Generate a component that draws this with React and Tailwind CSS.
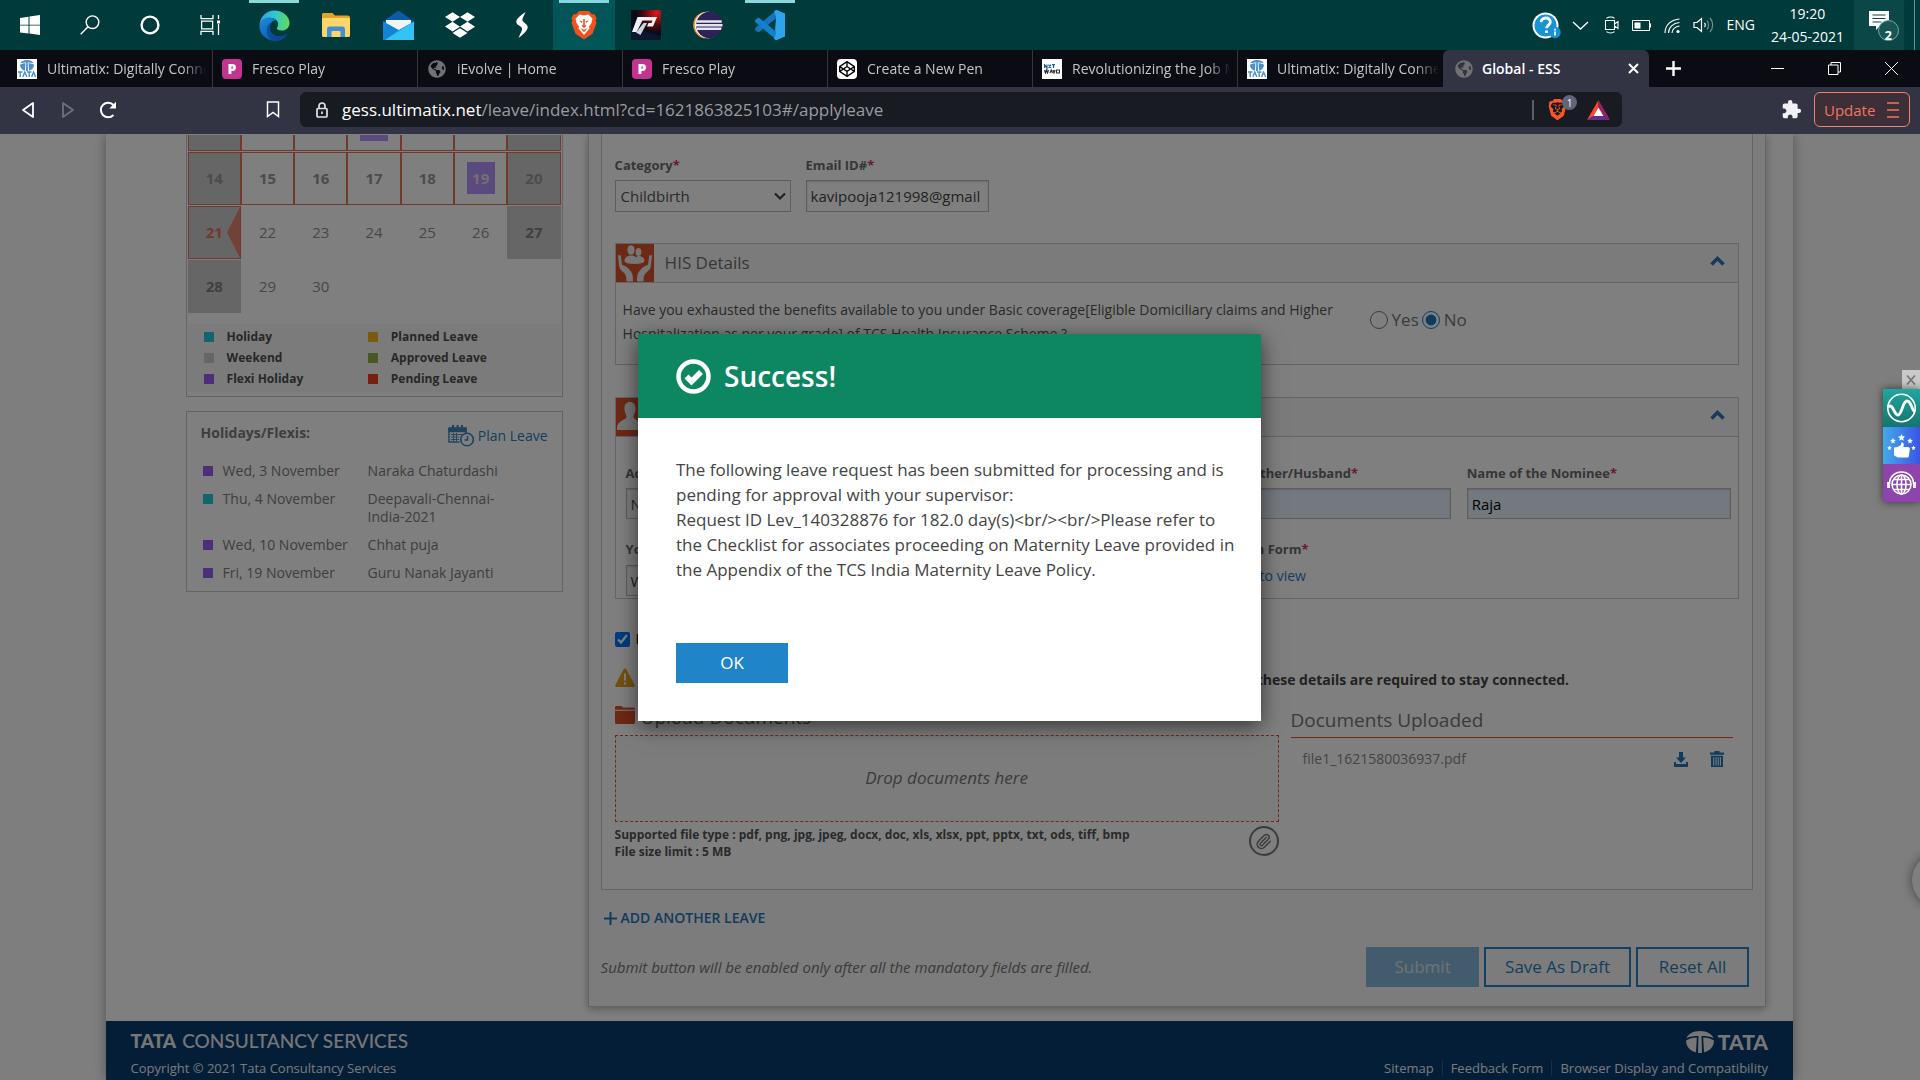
import React from "react";
import { FaCodepen, FaDropbox, FaGlobeAmericas } from "react-icons/fa";
import { MdExtension } from "react-icons/md";
import { SiBrave } from "react-icons/si";
import { Paperclip } from "lucide-react";

/* ---------- taskbar icons ---------- */

const WindowsIcon = () => (
  <svg width="20" height="20" viewBox="0 0 20 20" fill="#fff">
    <path d="M0 3l8.5-1.3v8H0zM9.5 1.5L20 0v9.7H9.5zM0 10.6h8.5v8L0 17.4zM9.5 10.6H20V20L9.5 18.6z" />
  </svg>
);
const SearchIcon = () => (
  <svg width="20" height="20" viewBox="0 0 20 20" fill="none" stroke="#fff" strokeWidth="1.4">
    <circle cx="12.5" cy="7.2" r="6.3" />
    <path d="M8 11.8L.7 19.3" />
  </svg>
);
const CortanaIcon = () => (
  <svg width="20" height="20" viewBox="0 0 20 20" fill="none" stroke="#fff" strokeWidth="2.4">
    <circle cx="10" cy="10" r="8.4" />
  </svg>
);
const TaskViewIcon = () => (
  <svg width="21" height="20" viewBox="0 0 21 20" fill="none" stroke="#fff" strokeWidth="1.3">
    <path d="M1 0v3.6h12V0M1 20v-3.6h12V20M1.6 6.2h11v7.6h-11zM18.5 0v4M18.5 9v11" />
    <path d="M17 5.5h3v3h-3z" fill="#fff" stroke="none" />
  </svg>
);
const EdgeIcon = ({ size = 31 }) => (
  <svg width={size} height={size} viewBox="0 0 32 32">
    <defs>
      <linearGradient id="edgeTop" x1="0" y1="0.4" x2="1" y2="0.5">
        <stop offset="0" stopColor="#2aa9e0" />
        <stop offset="0.5" stopColor="#33c6cf" />
        <stop offset="1" stopColor="#5fdc55" />
      </linearGradient>
      <linearGradient id="edgeLow" x1="0" y1="0" x2="0.8" y2="1">
        <stop offset="0" stopColor="#1b8de0" />
        <stop offset="1" stopColor="#0c4fa0" />
      </linearGradient>
    </defs>
    <path d="M.6 14.5C1.800 6 8 .4 16 .4c8.600 0 15.500 6 15.500 13 0 4.700-3.500 7.800-7.800 7.800-3.500 0-5.400-1.200-5.400-2.300 0-.8 1.500-1.600 1.500-4.300 0-3.600-3.700-6.600-8.600-6.600-5 0-8.800 2.500-10.600 6.500z" fill="url(#edgeTop)" />
    <path d="M.5 16C.8 11.500 4.500 8 10.600 8c3 0 5.400.9 7 2.400-3.800.7-6.400 4-6.400 8.100 0 5 4.200 8.500 9.500 8.500 2.800 0 5.600-.8 7.600-2 .6-.3 1 .2.700.7C26.300 29.500 21.700 31.700 16.500 31.700 7.500 31.700.2 25 .5 16z" fill="url(#edgeLow)" />
    <path d="M11.200 18.500c0-3.300 1.700-6.200 4.400-7.600C11 12.500 8 16.500 8 21.300c0 4.700 3 8.600 7.300 10.300 5.700.4 10.700-2 13.700-5.900.3-.5-.1-1-.7-.7-2 1.200-4.800 2-7.600 2-5.300 0-9.500-3.500-9.500-8.500z" fill="#0b3f8c" opacity=".65" />
  </svg>
);
const FolderIcon = () => (
  <svg width="28" height="24" viewBox="0 0 28 24">
    <path d="M0 1.500C0 .7.700 0 1.500 0h9l2.500 2.500H26c1 0 2 .8 2 2V22H0z" fill="#e0a526" />
    <path d="M1 5h26c.6 0 1 .4 1 1v16.500c0 .8-.5 1.500-1.500 1.500h-25C.7 24 0 23.300 0 22.500V6c0-.6.400-1 1-1z" fill="#fbd66b" />
    <path d="M5 24v-8c0-1.500 1-2.500 2.500-2.500h13c1.500 0 2.500 1 2.500 2.500v8h-4.500v-4.800c0-.7-.5-1.200-1.200-1.200h-6.600c-.7 0-1.200.5-1.200 1.200V24z" fill="#3f8fd8" />
  </svg>
);
const MailIcon = () => (
  <svg width="31" height="29" viewBox="0 0 31 29">
    <path d="M0 10.500L14 .5c1-.7 2-.7 3 0l14 10v5H0z" fill="#0c5ba8" />
    <path d="M3 9h25v11H3z" fill="#f4f4f4" />
    <path d="M0 10.500L15.500 19 31 10.500V28c0 .6-.4 1-1 1H1c-.6 0-1-.4-1-1z" fill="#1d9be3" />
    <path d="M31 10.500L2 29h28c.6 0 1-.4 1-1z" fill="#33c3f5" />
    <path d="M0 10.500L15.500 19 2 29H1c-.6 0-1-.4-1-1z" fill="#1384d4" />
  </svg>
);
const StrokeIcon = () => (
  <svg width="16" height="26" viewBox="0 0 16 26" fill="#fff">
    <path d="M11.500 0C7 3 3.500 6 2.500 8.500c-.8 2 .3 3.600 2.500 5 2.500 1.600 3.500 2.500 3 4.500L4.500 26C9 22.500 12.500 19.500 13.500 16.500c.7-2.200-.3-3.600-2.500-5.300C8.800 9.600 8 8.500 8.500 6.700z" />
  </svg>
);
const BraveIcon = () => (
  <svg width="26" height="30" viewBox="0 0 26 30">
    <path d="M8 1h10l3 3.200 2.300-.3L25.500 8l-.8 2.500.8 2.500-4.200 11L13 29.500 4.700 24 .5 13l.8-2.500L.5 8l2.200-4.100 2.300.3z" fill="#f4501e" />
    <path d="M13 5.500l4.500-1 4 4.300-1 4.200-2.500 3.500.5 2-5.500 6.500L7.500 18.500l.5-2L5.500 13l-1-4.200 4-4.300z" fill="#fff" />
    <path d="M8 10.200l3.600 1.300-.9 1.500zM18 10.200l-3.600 1.300.9 1.500zM12.200 9h1.600v5.600l1.700 1.300-2.500 1.800-2.500-1.800 1.700-1.300zM9.500 18.200l3.500 1.600 3.500-1.600-3.500 4z" fill="#f4501e" />
  </svg>
);
const RacingIcon = () => (
  <svg width="30" height="30" viewBox="0 0 30 30">
    <defs>
      <radialGradient id="race" cx="0.85" cy="0.1" r="0.7">
        <stop offset="0" stopColor="#e01818" />
        <stop offset="0.6" stopColor="#4a0a12" />
        <stop offset="1" stopColor="#070a14" />
      </radialGradient>
    </defs>
    <path d="M0 0h30v30H0z" fill="url(#race)" />
    <path d="M0 17l30 9v4H0z" fill="#0a1730" />
    <path d="M6.500 7H26l-4 9.500h-6l1.500-3.500h3l1-2.500h-10L5.500 22H1z" fill="#f2f2f2" />
    <path d="M12.500 13H16l-6.500 12L5 22.500z" fill="#cfd3da" />
  </svg>
);
const EclipseIcon = () => (
  <svg width="30" height="28" viewBox="0 0 30 28">
    <circle cx="13.500" cy="14" r="13.300" fill="#f0932c" />
    <circle cx="15" cy="14" r="13.200" fill="#fff" />
    <circle cx="16.300" cy="14" r="13.200" fill="#2c2255" />
    <path d="M4 9.300h24.700v2.400H3.300zM3 13h26.500v2.400H3zM3.400 16.600h25.300l-.7 2.400H4z" fill="#e6e4f2" />
  </svg>
);
const CodeIcon = () => (
  <svg width="30" height="30" viewBox="0 0 30 30">
    <path d="M21.500 0L30 3.800v22.400L21.500 30l-2-1z" fill="#2fa8f0" />
    <path d="M21.500 0v8L4 22.300 2.500 22 0 19.800v-1.600z" fill="#1274bd" />
    <path d="M21.500 30v-8L4 7.700 2.500 8 0 10.200v1.600z" fill="#0f82cf" />
    <path d="M21.500 0L19 1l2.500 7v14L19 29l2.500 1L30 26.200V3.800z" fill="#2fa3ec" />
  </svg>
);

const pinned = [
  { name: "Edge", icon: <EdgeIcon />, mark: true },
  { name: "File Explorer", icon: <FolderIcon /> },
  { name: "Mail", icon: <MailIcon /> },
  { name: "Dropbox", icon: <FaDropbox size={30} color="#fff" /> },
  { name: "Stroke", icon: <StrokeIcon /> },
  { name: "Brave", icon: <BraveIcon />, mark: true, active: true },
  { name: "Racing game", icon: <RacingIcon /> },
  { name: "Eclipse", icon: <EclipseIcon /> },
  { name: "Code", icon: <CodeIcon />, mark: true },
];

function Taskbar() {
  return (
    <div className="flex h-[50px] shrink-0 items-stretch bg-[#003a3b] text-white">
      {[
        ["Start", <WindowsIcon />],
        ["Search", <SearchIcon />],
        ["Cortana", <CortanaIcon />],
        ["Task view", <TaskViewIcon />],
      ].map(([name, icon]) => (
        <button key={name} aria-label={name} className="flex w-[60px] items-center justify-center">
          {icon}
        </button>
      ))}
      <div className="ml-[3px] flex items-stretch">
        {pinned.map((p) => (
          <button
            key={p.name}
            aria-label={p.name}
            className={
              p.active
                ? "relative flex w-[62px] items-center justify-center bg-[#035658]"
                : "relative flex w-[62px] items-center justify-center"
            }
          >
            {p.mark && <span className="absolute inset-x-1.5 top-0 h-[3px] bg-[#8ad8da]" />}
            {p.icon}
          </button>
        ))}
      </div>
      <div className="ml-auto flex items-center">
        <button aria-label="Help" className="mr-[11px]">
          <svg width="29" height="27" viewBox="0 0 29 27">
            <circle cx="13.500" cy="13.500" r="13" fill="#fff" />
            <circle cx="13.500" cy="13.500" r="11" fill="#1593d2" />
            <path d="M9 10.300c0-2.600 2-4.300 4.700-4.300s4.600 1.600 4.600 4c0 3.300-3.800 3.300-3.800 6.300M14.500 18.500v2.500" fill="none" stroke="#fff" strokeWidth="2.800" />
            <circle cx="23" cy="20.500" r="5.700" fill="#1593d2" />
            <path d="M23 19.500v4M23 16.800v1.600" stroke="#fff" strokeWidth="1.800" />
          </svg>
        </button>
        <svg className="mr-[15px]" width="17" height="9" viewBox="0 0 17 9" fill="none" stroke="#fff" strokeWidth="1.300">
          <path d="M1 1l7.500 7L16 1" />
        </svg>
        <svg className="mr-3" width="16" height="18" viewBox="0 0 16 18" fill="none" stroke="#fff" strokeWidth="1.100">
          <path d="M1.500 4.500h9v9h-9zM10.500 8l3.500-2.500v7L10.500 10M2.500 2.300C4.500.5 8.500.5 10.500 2.300M2.500 15.700c2 1.800 6 1.800 8 0" />
        </svg>
        <svg className="mr-3" width="20" height="11" viewBox="0 0 20 11" fill="none" stroke="#fff">
          <path d="M.5.5h17v10H.5zM18.500 3.500v4" />
          <path d="M2.500 2.500h6v6h-6z" fill="#fff" stroke="none" />
        </svg>
        <svg className="mr-3" width="17" height="17" viewBox="0 0 17 17" fill="none" stroke="#fff" strokeWidth="1.100">
          <path d="M1 16C1 8 7.500 2.500 15.500 2M4.500 16c0-5.500 4.500-10 11-10.500M8 16c0-3.500 3-6.500 7.500-7" />
          <circle cx="14" cy="14.500" r="1.600" fill="#fff" stroke="none" />
        </svg>
        <svg className="mr-3" width="21" height="16" viewBox="0 0 21 16" fill="none" stroke="#fff" strokeWidth="1.200">
          <path d="M1 5.500h3L8.500 1.500v13L4 10.500H1zM11.500 6c1 1 1 3 0 4" />
          <path d="M14 3.500c2 2.500 2 6.500 0 9M17 1c3.500 4 3.500 10 0 14" opacity=".45" />
        </svg>
        <span className="mr-4 text-[14px] leading-5">ENG</span>
        <div className="mr-2.5 flex flex-col items-center gap-[3px] text-[14px] leading-5">
          <span>19:20</span>
          <span>24-05-2021</span>
        </div>
        <button aria-label="Notifications, 2 new" className="relative flex h-[50px] w-[50px] items-center justify-end bg-[#0c4748] pr-[5px]">
          <svg width="30" height="32" viewBox="0 0 30 32">
            <path d="M0 2h20v15H11l-4 4v-4H0z" fill="#fff" />
            <path d="M3.500 6h13M3.500 9.500h13M3.500 13h9" stroke="#0c4748" strokeWidth="1.200" />
            <circle cx="19.500" cy="21.500" r="10" fill="#1a5556" stroke="#79a5a6" />
          </svg>
          <span className="absolute right-3 bottom-[7px] text-[13px] leading-4 font-bold">2</span>
        </button>
        <span className="mr-[5px] ml-2.5 h-[50px] w-px bg-[#6d9091]" />
      </div>
    </div>
  );
}

/* ---------- browser frame ---------- */

const TataMark = ({ width = 20, color = "#4a8fc7" }) => (
  <svg width={width} viewBox="0 0 28 22" fill={color}>
    <path d="M14 0c6.500 0 12 2.800 13.500 7C24 5.500 20 5 15.500 5L16 22h-4l.5-17C8 5 4 5.500.5 7 2 2.800 7.500 0 14 0z" />
    <path d="M10.800 6.500L10 21.300C4.300 19.900.2 16 0 9.500 3 7.500 7 6.600 10.800 6.500zM17.200 6.500l.8 14.800c5.700-1.400 9.800-5.300 10-11.800-3-2-7-2.900-10.800-3z" />
  </svg>
);
const TataFav = () => (
  <span className="flex h-5 w-5 shrink-0 flex-col items-center justify-center bg-white">
    <TataMark width={14} />
    <svg width="18" height="6" viewBox="0 0 18 6" fill="none" stroke="#4a8fc7" strokeWidth="1.400">
      <path d="M0 1h4.500M2.200 1v5M4.800 6L6.800 1l2 5M9 1h4.500M11.200 1v5M13.600 6l2-5 2 5" />
    </svg>
  </span>
);
const FrescoFav = () => (
  <span className="flex h-5 w-5 shrink-0 items-center justify-center rounded-sm bg-[#c2348f] text-[14px] leading-5 font-extrabold text-white">P</span>
);
const GlobeFav = () => (
  <span className="flex w-5 shrink-0 justify-center">
    <FaGlobeAmericas size={18} color="#6f7175" />
  </span>
);
const PenFav = () => (
  <span className="flex h-5 w-5 shrink-0 items-center justify-center rounded-sm bg-white">
    <FaCodepen size={16} color="#000" />
  </span>
);
const NxtFav = () => (
  <span className="flex h-5 w-5 shrink-0 items-center justify-center bg-white">
    <svg width="16" height="10" viewBox="0 0 16 10" fill="none" stroke="#255a92" strokeWidth="1.200">
      <path d="M.6 4V.6L3 4V.6M4.500.6L7 4M7 .6L4.500 4M8 .6h3M9.500.6V4" />
      <path d="M.5 6l1 3 1-3 1 3 1-3M6 9l1.200-3L8.500 9M9 6l1 3 1-3M12.500 6v3h3V6z" stroke="#333" />
    </svg>
  </span>
);

const tabs = [
  ["Ultimatix: Digitally Connected", <TataFav />],
  ["Fresco Play", <FrescoFav />],
  ["iEvolve | Home", <GlobeFav />],
  ["Fresco Play", <FrescoFav />],
  ["Create a New Pen", <PenFav />],
  ["Revolutionizing the Job Market", <NxtFav />],
  ["Ultimatix: Digitally Connected", <TataFav />],
];

function TabStrip() {
  return (
    <div className="flex h-[37px] shrink-0 items-stretch bg-[#0b0b14] pl-2 text-[14px] text-[#c3c4c8]">
      {tabs.map(([title, icon], i) => (
        <button
          key={i}
          className={
            i === 6
              ? "flex w-[205px] items-center gap-2.5 pr-1 pl-[9px]"
              : "flex w-[205px] items-center gap-2.5 border-r border-[#35363d] pr-1.5 pl-[9px]"
          }
        >
          {icon}
          <span className="min-w-0 flex-1 overflow-hidden [mask-image:linear-gradient(to_right,black_85%,transparent)] text-left leading-5 whitespace-nowrap">
            {title}
          </span>
        </button>
      ))}
      <div className="flex w-[206px] items-center rounded-t-md bg-[#323443] pr-2.5 pl-[11px] text-white">
        <button className="flex flex-1 items-center gap-2 font-semibold">
          <GlobeFav />
          <span className="leading-5">Global - ESS</span>
        </button>
        <button aria-label="Close tab">
          <svg width="11" height="11" viewBox="0 0 11 11" stroke="#fff" strokeWidth="2">
            <path d="M1 1l9 9M10 1l-9 9" />
          </svg>
        </button>
      </div>
      <button aria-label="New tab" className="ml-[17px] flex items-center">
        <svg width="15" height="15" viewBox="0 0 15 15" stroke="#fff" strokeWidth="2.400">
          <path d="M7.500 0v15M0 7.500h15" />
        </svg>
      </button>
      <div className="ml-auto flex items-center gap-11 pr-[22px]">
        <button aria-label="Minimize">
          <svg width="13" height="13" viewBox="0 0 13 13" stroke="#fff"><path d="M0 6.500h13" /></svg>
        </button>
        <button aria-label="Restore">
          <svg width="13" height="13" viewBox="0 0 13 13" fill="none" stroke="#fff"><path d="M.5 3h9.500v9.500H.5zM3 3V.5h9.500V10H10" /></svg>
        </button>
        <button aria-label="Close window">
          <svg width="13" height="13" viewBox="0 0 13 13" stroke="#fff"><path d="M0 0l13 13M13 0L0 13" /></svg>
        </button>
      </div>
    </div>
  );
}

function Toolbar() {
  return (
    <div className="flex h-[47px] shrink-0 items-center bg-[#323443] pr-2.5 pb-0.5 pl-[21px]">
      <button aria-label="Back">
        <svg width="14" height="18" viewBox="0 0 14 18" fill="none" stroke="#fff" strokeWidth="1.800" strokeLinejoin="round"><path d="M12 2v14L2 9z" /></svg>
      </button>
      <button aria-label="Forward" className="ml-[26px]">
        <svg width="14" height="18" viewBox="0 0 14 18" fill="none" stroke="#6d6f7b" strokeWidth="1.800" strokeLinejoin="round"><path d="M2 2v14l10-7z" /></svg>
      </button>
      <button aria-label="Reload" className="ml-6">
        <svg width="18" height="18" viewBox="0 0 18 18" fill="none" stroke="#fff" strokeWidth="2">
          <path d="M14.500 14A7.300 7.300 0 1 1 14.500 4" />
          <path d="M17 .8v6.700h-6.700z" fill="#fff" stroke="none" />
        </svg>
      </button>
      <button aria-label="Bookmark" className="ml-[149px]">
        <svg width="14" height="17" viewBox="0 0 14 17" fill="none" stroke="#fff" strokeWidth="1.500"><path d="M1.500 1h11v14.500L7 11.500l-5.500 4z" /></svg>
      </button>
      <div className="ml-5 flex h-[35px] min-w-0 flex-1 items-center rounded-md bg-[#181b22] pr-3 pl-4">
        <svg width="12" height="16" viewBox="0 0 12 16" fill="none" stroke="#e4e4e6" strokeWidth="1.700">
          <rect x="1" y="6.500" width="10" height="8.500" rx="1" />
          <path d="M3 6.500V4a3 3 0 0 1 6 0v2.500M6 9.500v2.500" />
        </svg>
        <span className="ml-[14px] text-[17px] leading-6 text-[#9b9ca1]">
          <span className="text-white">gess.ultimatix.net</span>/leave/index.html?cd=1621863825103#/applyleave
        </span>
        <span className="ml-auto h-5 w-0.5 bg-[#5d5f66]" />
        <button aria-label="Brave shields, 1 blocked" className="relative ml-[13px] flex w-[30px]">
          <SiBrave size={21} color="#fb542b" />
          <span className="absolute -top-1 right-0 flex h-[15px] w-[15px] items-center justify-center rounded-full bg-[#62657a] text-[10px] leading-3 text-white">1</span>
        </button>
        <button aria-label="Rewards" className="ml-2.5">
          <svg width="23" height="20" viewBox="0 0 23 20">
            <path d="M11.500 0L0 20l6.500-4 5-8.500z" fill="#ff4724" />
            <path d="M11.500 0L23 20l-6.500-4-5-8.500z" fill="#9e1f63" />
            <path d="M0 20h23l-6.500-4h-10z" fill="#662d91" />
            <path d="M11.500 7.500l5 8.500h-10z" fill="#fff" />
          </svg>
        </button>
      </div>
      <button aria-label="Extensions" className="ml-[159px]">
        <MdExtension size={21} color="#f1f1f3" />
      </button>
      <button className="ml-3 flex h-[35px] w-[96px] items-center justify-between rounded-md border border-[#f48070] bg-[#3d2f38] pr-2.5 pl-[9px] text-[15px] leading-5 text-[#f5735f]">
        Update
        <svg width="12" height="16" viewBox="0 0 12 16" stroke="#f5735f" strokeWidth="1.500"><path d="M0 1h12M0 8h12M0 15h12" /></svg>
      </button>
    </div>
  );
}

/* ---------- leave page ---------- */

const calendarRows = [
  [["14", "wr"], ["15", "r"], ["16", "r"], ["17", "r"], ["18", "r"], ["19", "f"], ["20", "wr"]],
  [["21", "t"], ["22"], ["23"], ["24"], ["25"], ["26"], ["27", "w"]],
  [["28", "w"], ["29"], ["30"], [""], [""], [""], [""]],
];
const cellClass = {
  wr: "border border-[#e5735f] bg-[#cdcdcd] font-bold text-[#989898]",
  r: "border border-[#e5735f] font-bold text-[#989898]",
  f: "border border-[#e5735f] font-bold text-[#e3e3e3]",
  t: "relative border border-[#e5735f] bg-[#cdcdcd] font-bold text-[#e5735f]",
  w: "bg-[#cdcdcd] font-bold text-[#808080]",
  plain: "text-[#8f8f8f]",
};

function Calendar() {
  return (
    <section className="border border-t-0 border-[#c8c8c8] px-px pb-1">
      <table className="w-full table-fixed border-separate border-spacing-x-0 border-spacing-y-px text-center text-[15px] leading-5">
        <tbody>
          <tr>
            {[0, 1, 2, 3, 4, 5, 6].map((d) => (
              <td
                key={d}
                className={
                  d === 0 || d === 6
                    ? "h-4 border border-t-0 border-[#e5735f] bg-[#cdcdcd] p-0"
                    : "h-4 border border-t-0 border-[#e5735f] p-0 align-top"
                }
              >
                {d === 3 && <span className="mx-auto block h-1.5 w-7 bg-[#b795fb]" />}
              </td>
            ))}
          </tr>
          {calendarRows.map((row, i) => (
            <tr key={i}>
              {row.map(([day, kind], j) => (
                <td key={j} className={"h-[53px] p-0 pb-0.5 " + cellClass[kind || "plain"]}>
                  {kind === "f" ? <span className="mx-auto flex h-8 w-7 items-center justify-center bg-[#b795fb]">{day}</span> : day}
                  {kind === "t" && (
                    <svg className="absolute top-0 right-0" width="13" height="51" viewBox="0 0 13 51"><path d="M13 0v51L0 25.500z" fill="#e5836f" /></svg>
                  )}
                </td>
              ))}
            </tr>
          ))}
        </tbody>
      </table>
      <ul className="mt-2.5 grid grid-cols-[46%_54%] bg-[#f7f7f7] pt-0.5 pb-[3px] pl-4 text-[12px] leading-[21px] font-bold text-[#4f4f4f]">
        {[
          ["bg-[#25c8dc]", "Holiday"],
          ["bg-[#f5b51b]", "Planned Leave"],
          ["bg-[#cdcdcd]", "Weekend"],
          ["bg-[#8eb04a]", "Approved Leave"],
          ["bg-[#9a5cf7]", "Flexi Holiday"],
          ["bg-[#ef4023]", "Pending Leave"],
        ].map(([color, name]) => (
          <li key={name} className="flex items-center gap-[13px]">
            <span className={"h-2.5 w-2.5 " + color} />
            {name}
          </li>
        ))}
      </ul>
    </section>
  );
}

function Holidays() {
  return (
    <section className="mt-[14px] border border-[#c8c8c8] px-[14px] pt-2 pb-1 text-[14px] leading-[18px] text-[#7c7c7c]">
      <div className="mb-[5px] flex h-8 items-start justify-between">
        <h2 className="pt-1 font-bold">Holidays/Flexis:</h2>
        <a href="#plan" className="flex h-8 items-center gap-1 text-[#2a7cb8]">
          <svg width="26" height="22" viewBox="0 0 26 22" fill="none" stroke="#3c87bf" strokeWidth="1.400">
            <path d="M1 3.500h17v5M1 3.500V17h10.500" />
            <path d="M1 3h17v3.500H1z" fill="#3c87bf" />
            <path d="M5 0v4M9.500 0v4M14 0v4" strokeWidth="2" />
            <path d="M3 9.500h11M3 12h8M3 14.500h8M5.500 8v8M8.500 8v8" strokeWidth=".9" />
            <circle cx="19" cy="14.500" r="6.300" strokeWidth="1.600" />
            <path d="M19.500 11v4h-3" />
          </svg>
          Plan Leave
        </a>
      </div>
      <ul>
        {[
          ["bg-[#9a5cf7]", "Wed, 3 November", "Naraka Chaturdashi"],
          ["bg-[#25c8dc]", "Thu, 4 November", "Deepavali-Chennai-India-2021"],
          ["bg-[#9a5cf7]", "Wed, 10 November", "Chhat puja"],
          ["bg-[#9a5cf7]", "Fri, 19 November", "Guru Nanak Jayanti"],
        ].map(([color, date, name]) => (
          <li key={date} className="flex py-[5px]">
            <span className={"mt-1 mr-2.5 ml-0.5 h-2.5 w-2.5 shrink-0 " + color} />
            <span className="w-[145px] shrink-0">{date}</span>
            <span className="w-[140px]">{name}</span>
          </li>
        ))}
      </ul>
    </section>
  );
}

const Star = () => <span className="text-[#d93058]">*</span>;

function Label({ htmlFor, children }) {
  return (
    <label htmlFor={htmlFor} className="block text-[13px] leading-[18px] font-bold whitespace-nowrap text-[#6c6c6c]">
      {children}
      <Star />
    </label>
  );
}

function Panel({ title, icon, className, children }) {
  return (
    <section className={"border border-[#c8c8c8] " + className}>
      <header className="flex h-[39px] items-center border-b border-[#c8c8c8] bg-[#f7f7f7]">
        <span className="flex h-[38px] w-[38px] shrink-0 items-center justify-center bg-[#d9532c]">{icon}</span>
        <h2 className="ml-[11px] text-[17px] leading-6 text-[#6f6f6f]">{title}</h2>
        <button aria-label={"Collapse " + title} className="mr-[13px] mb-1 ml-auto">
          <svg width="15" height="10" viewBox="0 0 15 10" fill="none" stroke="#2a74b4" strokeWidth="3.500"><path d="M1.500 8.500l6-6 6 6" /></svg>
        </button>
      </header>
      {children}
    </section>
  );
}

const HandsIcon = () => (
  <svg width="34" height="37" viewBox="0 0 34 37" fill="#ececec">
    <ellipse cx="13" cy="5" rx="3.600" ry="4.800" />
    <ellipse cx="20.500" cy="7" rx="2.900" ry="4" />
    <path d="M6.500 16.500c0-3.500 1.500-4.500 4.800-6h3.400c2 .8 3 1.300 3.600 2l1.200-1.500h2.500c2.800 1 4.500 2 4.500 5.500l-2 1.500c-5 1.200-11 1.200-16 0z" />
    <path d="M0 10.500c1.500-1.500 3 0 3 1.500l1 8c2 0 6 2.500 8.500 6 2 2.500 2.500 4.500 2.500 10.500H8.500C8.500 31 7.500 29 5 27 2 24.500 1.300 23 1 20zM34 10.500c-1.500-1.500-3 0-3 1.500l-1 8c-2 0-6 2.500-8.500 6-2 2.500-2.500 4.500-2.500 10.500h6.500c0-5.500 1-7.500 3.500-9.500 3-2.500 3.700-4 4-7z" />
  </svg>
);
const PeopleIcon = () => (
  <svg width="36" height="30" viewBox="0 0 36 30" fill="#ececec">
    <path d="M13 0c3.500 0 5.500 2.500 5.500 6.500 0 4.500-2 6-2 8.500 0 3 8.500 3.500 8.500 11v2H0v-2c0-7.500 9.500-8 9.500-11 0-2.500-2-4-2-8.500C7.500 2.500 9.500 0 13 0z" />
    <path d="M26 4c3 0 4.500 2 4.500 5s-1.800 4.500-1.800 6.500c0 2.500 7.300 3 7.300 8.500v2h-9c-.5-6-5-8-6.500-9.500C23 14 21.500 13 21.500 9S23 4 26 4z" />
  </svg>
);

const inputBase = "block w-full border border-[#bdbdbd] pl-1 pr-2 text-[15px] shadow-[inset_0_1px_2px_rgba(0,0,0,0.15)]";

function LeaveForm() {
  return (
    <div className="border border-t-0 border-[#c8c8c8] bg-white px-[13px] pt-[22px] pb-[29px]">
      <div className="flex gap-[15px]">
        <div className="w-[176px]">
          <Label htmlFor="category">Category</Label>
          <div className="relative mt-1.5">
            <select id="category" className="block h-8 w-full appearance-none border border-[#bdbdbd] bg-white px-[5px] text-[15px] leading-5 text-[#555]">
              <option>Childbirth</option>
            </select>
            <svg className="pointer-events-none absolute top-3 right-[5px]" width="12" height="9" viewBox="0 0 12 9" fill="none" stroke="#444" strokeWidth="2.200"><path d="M1 1.500l5 5 5-5" /></svg>
          </div>
        </div>
        <div className="w-[183px]">
          <Label htmlFor="email">Email ID#</Label>
          <input id="email" className={inputBase + " mt-1.5 h-8 bg-white text-[#444]"} defaultValue="kavipooja121998@gmail.com" />
        </div>
      </div>

      <Panel title="HIS Details" icon={<HandsIcon />} className="mt-[31px]">
        <fieldset className="flex items-start px-[7px] pt-[15px] pb-[18px]">
          <p className="w-[747px] text-[14px] leading-6 text-[#555]">
            Have you exhausted the benefits available to you under Basic coverage[Eligible Domiciliary claims and Higher
            <br />
            Hospitalization as per your grade] of TCS Health Insurance Scheme ?
          </p>
          <div className="mt-2.5 flex items-center text-[17px] leading-6 text-[#777]">
            <input id="his-yes" name="his" type="radio" className="h-[18px] w-[18px] accent-[#1b78c2]" />
            <label htmlFor="his-yes" className="mr-[3px] ml-1">Yes</label>
            <input id="his-no" name="his" type="radio" defaultChecked className="h-[18px] w-[18px] accent-[#1b78c2]" />
            <label htmlFor="his-no" className="ml-1">No</label>
          </div>
        </fieldset>
      </Panel>

      <Panel title="Nominee Details" icon={<PeopleIcon />} className="mt-8">
        <div className="grid grid-cols-4 gap-x-4 pt-[27px] pr-[7px] pb-[2px] pl-[10px]">
          <div>
            <Label htmlFor="address">Address</Label>
            <input id="address" className={inputBase + " mt-1.5 h-[31px] bg-white text-[#555]"} defaultValue="No" />
          </div>
          <div>
            <Label htmlFor="contact">Contact Number</Label>
            <input id="contact" className={inputBase + " mt-1.5 h-[31px] bg-[#e8f0fe]"} defaultValue="" />
          </div>
          <div>
            <Label htmlFor="guardian">Name of Father/Husband</Label>
            <input id="guardian" className={inputBase + " mt-1.5 h-[31px] bg-[#e8f0fe]"} defaultValue="" />
          </div>
          <div>
            <Label htmlFor="nominee">Name of the Nominee</Label>
            <input id="nominee" className={inputBase + " mt-1.5 h-[31px] bg-[#e8f0fe]"} defaultValue="Raja" />
          </div>
          <div className="mt-[21px]">
            <Label htmlFor="relation">Your Relationship</Label>
            <input id="relation" className={inputBase + " mt-[7px] h-[31px] bg-white text-[#444]"} defaultValue="Wife" />
          </div>
          <div className="col-start-3 mt-[21px]">
            <p className="text-[13px] leading-[18px] font-bold text-[#6c6c6c]">Nomination Form<Star /></p>
            <a href="#nomination" className="mt-2 block pl-1.5 text-[14px] leading-5 text-[#2a7cb8]">Click here to view</a>
          </div>
        </div>
      </Panel>

      <div className="mt-[30px] flex h-5 items-center gap-1.5">
        <input id="confirm" type="checkbox" defaultChecked className="h-[15px] w-[15px] accent-[#0075ff]" />
        <label htmlFor="confirm" className="text-[14px] leading-5 font-bold text-[#222]">I confirm that the details given are correct</label>
      </div>
      <div className="mt-[18px] flex h-5 items-center gap-2.5">
        <svg width="20" height="19" viewBox="0 0 20 19">
          <path d="M8.800.9c.5-1 1.900-1 2.400 0l8.500 16.200c.5.9-.1 1.900-1.100 1.900H1.400c-1 0-1.600-1-1.100-1.900z" fill="#e8a51c" />
          <path d="M10 5.500v7M10 14.200v2.300" stroke="#fff" strokeWidth="2" />
        </svg>
        <p className="pt-1.5 text-[14px] leading-5 font-bold text-[#444]">
          Please update your personal e-mail and contact number before proceeding on leave, as these details are required to stay connected.
        </p>
      </div>

      <div className="mt-4 flex gap-3 pr-1.5">
        <div className="min-w-0 flex-[3]">
          <h3 className="flex h-7 items-center gap-1.5 text-[19px] leading-7 text-[#666]">
            <svg className="mb-1" width="20" height="18" viewBox="0 0 20 18" fill="#d9532c">
              <path d="M0 1.500C0 .7.600 0 1.400 0h4.800c.8 0 1.300.5 1.500 1.500h10.500c1 0 1.800.6 1.800 1.500v.8H0zM0 4.800h20v11.700c0 .8-.6 1.500-1.500 1.500h-17C.6 18 0 17.300 0 16.500z" />
            </svg>
            Upload Documents
          </h3>
          <div className="mt-1 flex h-[87px] items-center justify-center border border-dashed border-[#e4532f] bg-[#f8f8f8] pb-0.5 text-[17px] leading-6 text-[#777] italic">
            Drop documents here
          </div>
          <div className="mt-1 flex items-start justify-between text-[12px] leading-[17px] font-bold text-[#555]">
            <p>
              Supported file type : pdf, png, jpg, jpeg, docx, doc, xls, xlsx, ppt, pptx, txt, ods, tiff, bmp
              <br />
              File size limit : 5 MB
            </p>
            <button aria-label="Attach a file" className="flex h-[30px] w-[30px] shrink-0 items-center justify-center rounded-full border-2 border-[#777] text-[#777]">
              <Paperclip size={17} strokeWidth={2} />
            </button>
          </div>
        </div>
        <div className="min-w-0 flex-[2]">
          <h3 className="h-[35px] border-b border-[#e4532f] text-[19px] leading-[34px] text-[#777]">Documents Uploaded</h3>
          <div className="flex h-[42px] items-center pr-[9px] pl-3">
            <a href="#file" className="mr-auto text-[14px] leading-5 text-[#8a8a8a]">file1_1621580036937.pdf</a>
            <button aria-label="Download file" className="mr-[22px]">
              <svg width="14" height="15" viewBox="0 0 14 15" fill="#1f79ba">
                <path d="M5 0h4v5.500h3L7 11 2 5.500h3zM0 10h2v2h10v-2h2v5H0z" />
              </svg>
            </button>
            <button aria-label="Delete file">
              <svg width="14" height="16" viewBox="0 0 14 16" fill="#1f79ba">
                <path d="M4.500 0h5v1.500H14v2.200H0V1.500h4.500zM1 4.700h12V16H1zm2.200 1.500v8.300h1V6.200zm2.300 0v8.300h1V6.200zm2.200 0v8.300h1V6.200zm2.200 0v8.300h1V6.200z" fillRule="evenodd" />
              </svg>
            </button>
          </div>
        </div>
      </div>
    </div>
  );
}

function Footer() {
  return (
    <footer className="flex h-[60px] shrink-0 justify-between bg-[#083c70] px-[25px] pt-[10px] text-[13px] leading-5 text-[#f2f2f2]">
      <div>
        <p className="flex gap-1.5 font-['Lato',sans-serif] text-[19px] leading-5 text-[#ececec]">
          <b className="font-black">TATA</b>
          <span className="font-medium">CONSULTANCY SERVICES</span>
        </p>
        <p className="mt-[7px]">Copyright © 2021 Tata Consultancy Services</p>
      </div>
      <div className="flex flex-col items-end">
        <p className="flex items-center gap-1 font-['Lato',sans-serif] text-[21px] leading-5 font-black text-[#ececec]">
          <TataMark width={28} color="#ececec" />
          TATA
        </p>
        <nav className="mt-[5px] flex items-center">
          <a href="#sitemap">Sitemap</a>
          <span className="mx-2 h-4 w-px bg-[#3b5f88]" />
          <a href="#feedback">Feedback Form</a>
          <span className="mx-2 h-4 w-px bg-[#3b5f88]" />
          <a href="#browsers">Browser Display and Compatibility</a>
        </nav>
      </div>
    </footer>
  );
}

function SuccessDialog() {
  return (
    <div role="dialog" aria-labelledby="dialog-title" className="w-[623px] bg-white shadow-[0_5px_20px_rgba(0,0,0,0.6)]">
      <header className="flex h-[84px] items-center gap-[13px] bg-[#0d8662] px-[38px] text-white">
        <svg width="35" height="35" viewBox="0 0 35 35" fill="none">
          <circle cx="17.500" cy="17.500" r="15" stroke="#fff" strokeWidth="4.500" />
          <path d="M10.500 17.500l5 5 9.500-9.500" stroke="#fff" strokeWidth="5.500" />
        </svg>
        <h1 id="dialog-title" className="text-[28px] leading-9 font-semibold">Success!</h1>
      </header>
      <div className="px-[38px] pt-[39px] pb-[38px]">
        <p className="text-[17px] leading-[25px] whitespace-nowrap text-[#444]">
          The following leave request has been submitted for processing and is
          <br />
          pending for approval with your supervisor:
          <br />
          {"Request ID Lev_140328876 for 182.0 day(s)<br/><br/>Please refer to"}
          <br />
          the Checklist for associates proceeding on Maternity Leave provided in
          <br />
          the Appendix of the TCS India Maternity Leave Policy.
        </p>
        <button className="mt-[61px] block h-10 w-[112px] bg-[#2084c8] text-[17px] leading-6 text-white">OK</button>
      </div>
    </div>
  );
}

function SideDock() {
  return (
    <aside className="absolute top-[236px] right-0 flex flex-col items-end">
      <button aria-label="Close dock" className="flex h-[19px] w-[18px] items-center justify-center bg-[#c9c9c9]">
        <svg width="10" height="10" viewBox="0 0 10 10" stroke="#7a7a7a" strokeWidth="1.800"><path d="M1 0.500l8 9M9 .5l-8 9" /></svg>
      </button>
      <div className="flex w-[37px] flex-col shadow-[0_0_8px_rgba(0,0,0,0.6)]">
        <button aria-label="Pulse" className="flex h-[38px] items-center justify-center bg-gradient-to-b from-[#1fa79f] to-[#14756f]">
          <svg width="31" height="30" viewBox="0 0 31 30" fill="none" stroke="#fff">
            <circle cx="15.500" cy="15" r="13.700" strokeWidth="1.600" />
            <path d="M2 14c5-4.500 6 8 10 8s4.500-14 9-14 4 8 8 11" strokeWidth="2.800" />
          </svg>
        </button>
        <button aria-label="Feedback" className="flex h-[37px] items-center justify-center bg-gradient-to-r from-[#45a8e8] to-[#3d53e6]">
          <svg width="29" height="24" viewBox="0 0 29 24" fill="#fff">
            <path d="M14.500 0l1 2.200 2.500.3-1.800 1.700.5 2.500-2.200-1.200-2.200 1.200.5-2.500L11 2.500l2.500-.3zM6 4l.8 1.800 2 .3-1.500 1.300.4 2L6 8.500l-1.700.9.4-2L3.200 6.100l2-.3zM23 4l.8 1.800 2 .3-1.500 1.300.4 2-1.700-.9-1.700.9.4-2-1.500-1.300 2-.3zM2.500 11.500l.7 1.500 1.600.2-1.200 1.100.3 1.700-1.400-.8-1.400.8.3-1.700L.2 13.200l1.600-.2zM26.500 11.500l.7 1.500 1.600.2-1.200 1.100.3 1.700-1.400-.8-1.400.8.3-1.700-1.200-1.100 1.600-.2z" />
            <path d="M7 13.500l3.500-.5 3.500-2 .3-2.500c1.500-.5 2.700.7 2.400 2.300L16.500 13H21c1.500 0 2 1 1.800 2L22 22c-.2 1-1 1.500-2.200 1.500H11L7 21.500z" />
          </svg>
        </button>
        <button aria-label="Support" className="flex h-[38px] items-center justify-center bg-[#8e43ad]">
          <svg width="29" height="24" viewBox="0 0 29 24" fill="none" stroke="#fff" strokeWidth="1.600">
            <circle cx="14.500" cy="13.500" r="9.500" />
            <path d="M14.500 4v19M5 13.500h19M6.500 8.500h16M6.500 18.500h16" />
            <ellipse cx="14.500" cy="13.500" rx="4.500" ry="9.500" />
            <path d="M2.500 13C2.500 5.500 8 1 14.500 1s12 4.500 12 12" />
            <path d="M1.500 11v6M27.500 11v6" strokeWidth="2.800" />
          </svg>
        </button>
      </div>
    </aside>
  );
}

export default function App() {
  return (
    <div className="flex h-screen flex-col overflow-hidden font-['Open_Sans',sans-serif]">
      <Taskbar />
      <TabStrip />
      <Toolbar />
      <main className="relative min-h-0 flex-1 overflow-hidden bg-[#fdfdfd]">
        <div className="pr-[6.61%] pl-[5.5%]">
          <div className="bg-white shadow-[0_0_12px_rgba(0,0,0,0.35)]">
            <div className="flex items-start gap-[25px] pr-[27px] pb-[14px] pl-[80px]">
              <div className="w-[377px] shrink-0">
                <Calendar />
                <Holidays />
              </div>
              <div className="min-w-0 flex-1 border border-t-0 border-[#c8c8c8] bg-[#f8f8f8] px-3 pb-[19px] shadow-[0_2px_8px_rgba(0,0,0,0.3)]">
                <LeaveForm />
                <button className="mt-[17px] flex items-center gap-1 pl-[3px] text-[14px] leading-[22px] font-semibold text-[#2277b8]">
                  <svg width="13" height="13" viewBox="0 0 13 13" stroke="#2277b8" strokeWidth="2"><path d="M6.500 0v13M0 6.500h13" /></svg>
                  ADD ANOTHER LEAVE
                </button>
                <div className="mt-[18px] flex items-center gap-[5px] pr-1">
                  <p className="mr-auto text-[15px] leading-5 text-[#777] italic">
                    Submit button will be enabled only after all the mandatory fields are filled.
                  </p>
                  <button disabled className="h-10 w-[113px] bg-[#84b8dc] text-[17px] leading-6 text-[#e4e4e4]">Submit</button>
                  <button className="h-10 w-[147px] border-2 border-[#2084c8] text-[17px] leading-6 text-[#2a7cb8]">Save As Draft</button>
                  <button className="h-10 w-[113px] border-2 border-[#2084c8] text-[17px] leading-6 text-[#2a7cb8]">Reset All</button>
                </div>
              </div>
            </div>
            <Footer />
          </div>
        </div>
        <button aria-label="Open assistant" className="absolute top-[719px] -right-[46px] h-[54px] w-[54px] rounded-full bg-white shadow-[0_0_12px_rgba(0,0,0,0.5)]" />
        <div className="absolute inset-0 flex items-start justify-center bg-black/50 pt-[200px] pr-[21px]">
          <SuccessDialog />
        </div>
        <SideDock />
      </main>
    </div>
  );
}
